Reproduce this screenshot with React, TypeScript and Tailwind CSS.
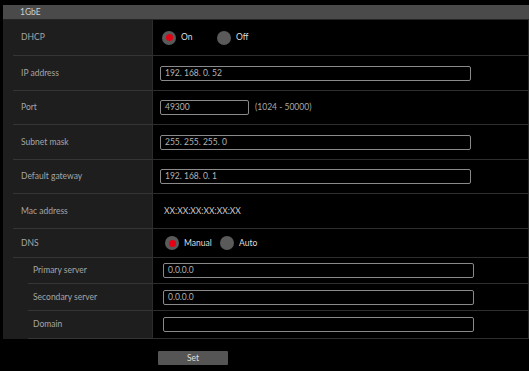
import React from 'react';

const font = { fontFamily: 'Lato, "Liberation Sans", sans-serif' };

function Radio({ checked, label }: { checked?: boolean; label: string }) {
  return (
    <div className="w-[55px] flex items-center gap-[5px]">
      <div className="w-[14px] h-[14px] rounded-full bg-[#5a5a5a] flex items-center justify-center">
        {checked && <div className="w-[7px] h-[7px] rounded-full bg-[#e50014]" />}
      </div>
      <span className="text-[8.5px] text-[#dedede]">{label}</span>
    </div>
  );
}

function Field({ value, w = 'w-[311px]' }: { value: string; w?: string }) {
  return (
    <div className={`${w} h-[15px] border border-[#8a8a8a] rounded-[2px] bg-black flex items-center px-[4px] text-[8.5px] text-[#b4b4b4]`}>
      {value}
    </div>
  );
}

function Row({ label, h, sub, children }: { label: string; h: string; sub?: boolean; children: React.ReactNode }) {
  return (
    <div className={`flex ${h}`}>
      <div className="w-[150px] shrink-0 bg-[#1e1e1e] border-r border-[#2c2c2c] flex flex-col">
        <div className={`flex-1 flex border-b border-[#353535] ${sub ? 'ml-[25px]' : 'ml-[10px]'}`}>
          <span className={`self-center text-[8.5px] text-[#a5a5a5] ${sub ? 'pl-[5px]' : 'pl-[8px]'}`}>{label}</span>
        </div>
      </div>
      <div className="flex-1 flex items-center border-b border-[#2e2e2e] border-r border-r-[#2a2a2a]">{children}</div>
    </div>
  );
}

export default function App() {
  return (
    <div className="w-[529px] h-[371px] bg-black pt-[5px] overflow-hidden" style={font}>
      <div className="ml-[3px] h-[14px] bg-[#4a4a4a] flex items-center pl-[17px] text-[8.5px] text-[#cfcfcf]">1GbE</div>
      <div className="ml-[3px] h-[1px] bg-[#262626]" />
      <div className="ml-[3px]">
        <Row label="DHCP" h="h-[36px]">
          <div className="flex ml-[9px]">
            <Radio checked label="On" />
            <Radio label="Off" />
          </div>
        </Row>
        <Row label="IP address" h="h-[35px]">
          <div className="ml-[7px]"><Field value="192. 168. 0. 52" /></div>
        </Row>
        <Row label="Port" h="h-[34px]">
          <div className="ml-[7px] flex items-center gap-[6px]">
            <Field value="49300" w="w-[89px]" />
            <span className="text-[8.5px] text-[#a9a9a9]">(1024 - 50000)</span>
          </div>
        </Row>
        <Row label="Subnet mask" h="h-[35px]">
          <div className="ml-[7px]"><Field value="255. 255. 255. 0" /></div>
        </Row>
        <Row label="Default gateway" h="h-[34px]">
          <div className="ml-[7px]"><Field value="192. 168. 0. 1" /></div>
        </Row>
        <Row label="Mac address" h="h-[35px]">
          <span className="ml-[11px] text-[8.5px] text-[#cccccc]">XX:XX:XX:XX:XX:XX</span>
        </Row>
        <Row label="DNS" h="h-[29px]">
          <div className="flex ml-[12px]">
            <Radio checked label="Manual" />
            <Radio label="Auto" />
          </div>
        </Row>
        <Row label="Primary server" h="h-[26px]" sub>
          <div className="ml-[10px]"><Field value="0.0.0.0" /></div>
        </Row>
        <Row label="Secondary server" h="h-[27px]" sub>
          <div className="ml-[10px]"><Field value="0.0.0.0" /></div>
        </Row>
        <Row label="Domain" h="h-[28px]" sub>
          <div className="ml-[10px]"><Field value="" /></div>
        </Row>
      </div>
      <div className="mt-[12px] ml-[158px] w-[70px] h-[14px] bg-[#555555] rounded-[1px] flex items-center justify-center text-[8.5px] text-[#dddddd]">Set</div>
    </div>
  );
}
